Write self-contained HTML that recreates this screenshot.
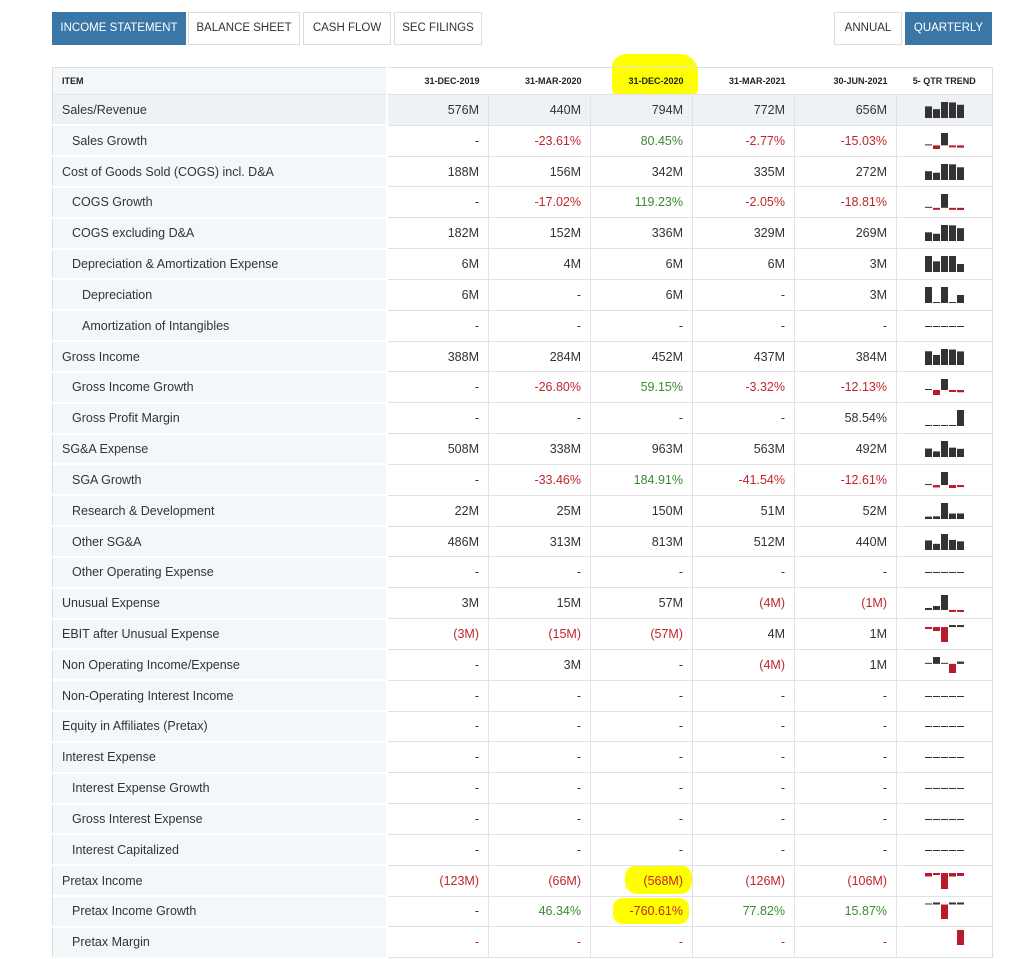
<!DOCTYPE html>
<html><head><meta charset="utf-8">
<style>
*{box-sizing:border-box;margin:0;padding:0}
body{width:1036px;height:939px;overflow:hidden;background:#fff;font-family:"Liberation Sans",sans-serif;color:#333;position:relative}
.btn{position:absolute;top:12px;height:33px;border:1px solid #ddd;background:#fff;font-size:11.5px;line-height:31px;text-align:center;color:#333}
.btn.on{background:#3a76a6;color:#fff;border-color:#3a76a6}
.hl{position:absolute;background:#ffff00;border-radius:8px}
table{position:absolute;left:52px;top:67px;width:940px;border-collapse:collapse;table-layout:fixed;font-size:12.5px}
td,th{padding:0 9px;white-space:nowrap;overflow:hidden;line-height:14px}
td{height:30.84px}
th{height:27px;font-size:9px;font-weight:bold;color:#222;text-align:right;background:transparent;border-bottom:1px solid #e4e4e4}
th.i{text-align:left;background:#f4f7fa;border-right:2px solid #fff;border-left:1px solid #ddd;border-top:1px solid #ddd}
th.d{border-top:1px solid #ddd}
th.t{text-align:center;border-right:1px solid #ddd}
td{text-align:right;border:1px solid #e2e2e2}
td.i{text-align:left;background:#f4f7fa;border:none;border-left:1px solid #ddd;border-bottom:2px solid #fff;border-right:2px solid #fff}
td.l1{padding-left:19px}td.l2{padding-left:29px}
td.t{padding:0;text-align:center;border-right:1px solid #ddd}
tr.g td{background:#eef2f6}
tr.g td.i{background:#eef2f6}
.r{color:#c0262d}.gr{color:#3b8a32}
svg{display:block;margin:0 auto}
</style></head><body>
<div class="hl" style="left:612px;top:54px;width:86px;height:41px;border-radius:14px 18px 6px 6px"></div>
<div class="hl" style="left:625px;top:865px;width:67px;height:29px;border-radius:12px"></div>
<div class="hl" style="left:613px;top:898px;width:76px;height:26px;border-radius:10px"></div>
<div class="btn on" style="left:52px;width:134px">INCOME STATEMENT</div>
<div class="btn" style="left:188px;width:112px">BALANCE SHEET</div>
<div class="btn" style="left:303px;width:88px">CASH FLOW</div>
<div class="btn" style="left:394px;width:88px">SEC FILINGS</div>
<div class="btn" style="left:834px;width:68px">ANNUAL</div>
<div class="btn on" style="left:905px;width:87px">QUARTERLY</div>
<table id="tb">
<colgroup><col style="width:334px"><col style="width:102px"><col style="width:102px"><col style="width:102px"><col style="width:102px"><col style="width:102px"><col style="width:96px"></colgroup>
<tr><th class="i">ITEM</th><th class="d">31-DEC-2019</th><th class="d">31-MAR-2020</th><th class="d">31-DEC-2020</th><th class="d">31-MAR-2021</th><th class="d">30-JUN-2021</th><th class="d t">5- QTR TREND</th></tr>
<tr class="g"><td class="i">Sales/Revenue</td><td>576M</td><td>440M</td><td>794M</td><td>772M</td><td>656M</td><td class="t"></td></tr>
<tr><td class="i l1">Sales Growth</td><td>-</td><td class="r">-23.61%</td><td class="gr">80.45%</td><td class="r">-2.77%</td><td class="r">-15.03%</td><td class="t"></td></tr>
<tr><td class="i">Cost of Goods Sold (COGS) incl. D&amp;A</td><td>188M</td><td>156M</td><td>342M</td><td>335M</td><td>272M</td><td class="t"></td></tr>
<tr><td class="i l1">COGS Growth</td><td>-</td><td class="r">-17.02%</td><td class="gr">119.23%</td><td class="r">-2.05%</td><td class="r">-18.81%</td><td class="t"></td></tr>
<tr><td class="i l1">COGS excluding D&amp;A</td><td>182M</td><td>152M</td><td>336M</td><td>329M</td><td>269M</td><td class="t"></td></tr>
<tr><td class="i l1">Depreciation &amp; Amortization Expense</td><td>6M</td><td>4M</td><td>6M</td><td>6M</td><td>3M</td><td class="t"></td></tr>
<tr><td class="i l2">Depreciation</td><td>6M</td><td>-</td><td>6M</td><td>-</td><td>3M</td><td class="t"></td></tr>
<tr><td class="i l2">Amortization of Intangibles</td><td>-</td><td>-</td><td>-</td><td>-</td><td>-</td><td class="t"></td></tr>
<tr><td class="i">Gross Income</td><td>388M</td><td>284M</td><td>452M</td><td>437M</td><td>384M</td><td class="t"></td></tr>
<tr><td class="i l1">Gross Income Growth</td><td>-</td><td class="r">-26.80%</td><td class="gr">59.15%</td><td class="r">-3.32%</td><td class="r">-12.13%</td><td class="t"></td></tr>
<tr><td class="i l1">Gross Profit Margin</td><td>-</td><td>-</td><td>-</td><td>-</td><td>58.54%</td><td class="t"></td></tr>
<tr><td class="i">SG&amp;A Expense</td><td>508M</td><td>338M</td><td>963M</td><td>563M</td><td>492M</td><td class="t"></td></tr>
<tr><td class="i l1">SGA Growth</td><td>-</td><td class="r">-33.46%</td><td class="gr">184.91%</td><td class="r">-41.54%</td><td class="r">-12.61%</td><td class="t"></td></tr>
<tr><td class="i l1">Research &amp; Development</td><td>22M</td><td>25M</td><td>150M</td><td>51M</td><td>52M</td><td class="t"></td></tr>
<tr><td class="i l1">Other SG&amp;A</td><td>486M</td><td>313M</td><td>813M</td><td>512M</td><td>440M</td><td class="t"></td></tr>
<tr><td class="i l1">Other Operating Expense</td><td>-</td><td>-</td><td>-</td><td>-</td><td>-</td><td class="t"></td></tr>
<tr><td class="i">Unusual Expense</td><td>3M</td><td>15M</td><td>57M</td><td class="r">(4M)</td><td class="r">(1M)</td><td class="t"></td></tr>
<tr><td class="i">EBIT after Unusual Expense</td><td class="r">(3M)</td><td class="r">(15M)</td><td class="r">(57M)</td><td>4M</td><td>1M</td><td class="t"></td></tr>
<tr><td class="i">Non Operating Income/Expense</td><td>-</td><td>3M</td><td>-</td><td class="r">(4M)</td><td>1M</td><td class="t"></td></tr>
<tr><td class="i">Non-Operating Interest Income</td><td>-</td><td>-</td><td>-</td><td>-</td><td>-</td><td class="t"></td></tr>
<tr><td class="i">Equity in Affiliates (Pretax)</td><td>-</td><td>-</td><td>-</td><td>-</td><td>-</td><td class="t"></td></tr>
<tr><td class="i">Interest Expense</td><td>-</td><td>-</td><td>-</td><td>-</td><td>-</td><td class="t"></td></tr>
<tr><td class="i l1">Interest Expense Growth</td><td>-</td><td>-</td><td>-</td><td>-</td><td>-</td><td class="t"></td></tr>
<tr><td class="i l1">Gross Interest Expense</td><td>-</td><td>-</td><td>-</td><td>-</td><td>-</td><td class="t"></td></tr>
<tr><td class="i l1">Interest Capitalized</td><td>-</td><td>-</td><td>-</td><td>-</td><td>-</td><td class="t"></td></tr>
<tr><td class="i">Pretax Income</td><td class="r">(123M)</td><td class="r">(66M)</td><td class="r">(568M)</td><td class="r">(126M)</td><td class="r">(106M)</td><td class="t"></td></tr>
<tr><td class="i l1">Pretax Income Growth</td><td>-</td><td class="gr">46.34%</td><td class="r">-760.61%</td><td class="gr">77.82%</td><td class="gr">15.87%</td><td class="t"></td></tr>
<tr><td class="i l1">Pretax Margin</td><td class="r">-</td><td class="r">-</td><td class="r">-</td><td class="r">-</td><td class="r">-</td><td class="t"></td></tr>
</table>
<script>
(function(){
var rows=document.querySelectorAll('#tb tr');
for(var k=1;k<rows.length;k++){
 var tds=rows[k].querySelectorAll('td'),v=[];
 for(var j=1;j<=5;j++){var s=tds[j].textContent.trim();
  if(s=='-'){v.push(null);continue;}
  var neg=s[0]=='('||s[0]=='-';var n=parseFloat(s.replace(/[^0-9.]/g,''));v.push(neg?-n:n);}
 var last=(k==rows.length-1);
 if(last)v=[null,null,null,null,-1];
 var mp=0,mn=0;v.forEach(function(x){if(x!=null){if(x>mp)mp=x;if(-x>mn)mn=-x;}});
 var H=16,t0=7,pp=(mp+mn)?mp/(mp+mn)*H:H,base=t0+pp;
 if(mp+mn==0)base=16;
 if(last)base=2;
 var sv='<svg width="40" height="24" viewBox="0 3 40 24">';
 v.forEach(function(x,i){var X=i*8;
  if(x==null||x==0){if(!last)sv+='<rect x="'+X+'" y="'+(base-1)+'" width="7" height="1" fill="#333"/>';return;}
  var h=Math.abs(x)/(mp+mn)*H;if(h<2)h=2;
  if(x>0)sv+='<rect x="'+X+'" y="'+(base-h)+'" width="7" height="'+h+'" fill="#333"/>';
  else sv+='<rect x="'+X+'" y="'+base+'" width="7" height="'+(last?16:h)+'" fill="#b81c2c"/>';});
 sv+='</svg>';tds[6].innerHTML=sv;
}})();
</script>
</body></html>
